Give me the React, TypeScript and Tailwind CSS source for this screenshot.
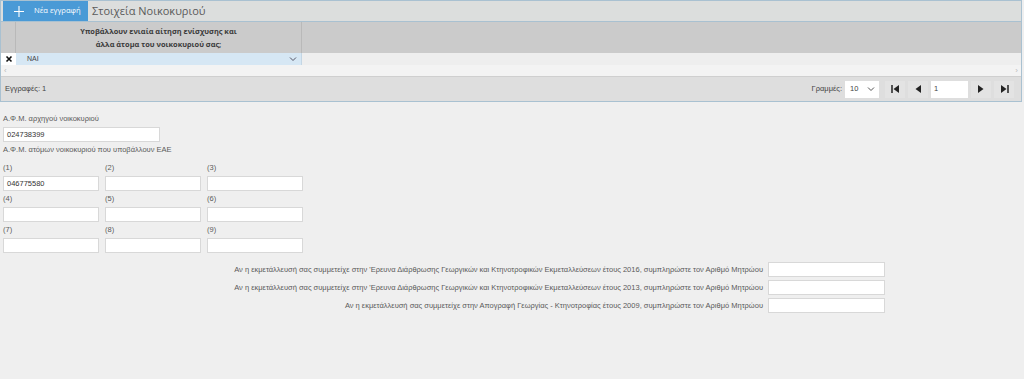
import React from "react";

const F = { fontFamily: "'Liberation Sans', Arial, sans-serif" };

const Field = ({ value = "", w = "w-[96px]" }: { value?: string; w?: string }) => (
  <div
    className={`${w} h-[15px] bg-white border border-[#d8d8d8] px-[3px] text-[7.5px] leading-[13px] text-[#333]`}
  >
    {value}
  </div>
);

const householdSlots = [
  ["(1)", "046775580"],
  ["(2)", ""],
  ["(3)", ""],
  ["(4)", ""],
  ["(5)", ""],
  ["(6)", ""],
  ["(7)", ""],
  ["(8)", ""],
  ["(9)", ""],
];

const registryRows = [
  "Αν η εκμετάλλευσή σας συμμετείχε στην 'Ερευνα Διάρθρωσης Γεωργικών και Κτηνοτροφικών Εκμεταλλεύσεων έτους 2016, συμπληρώστε τον Αριθμό Μητρώου",
  "Αν η εκμετάλλευσή σας συμμετείχε στην 'Ερευνα Διάρθρωσης Γεωργικών και Κτηνοτροφικών Εκμεταλλεύσεων έτους 2013, συμπληρώστε τον Αριθμό Μητρώου",
  "Αν η εκμετάλλευσή σας συμμετείχε στην Απογραφή Γεωργίας - Κτηνοτροφίας έτους 2009, συμπληρώστε τον Αριθμό Μητρώου",
];

const PagerBtn = ({ children }: { children: React.ReactNode }) => (
  <div className="w-[20px] h-[17px] flex items-center justify-center bg-[#e3e3e3] text-[#333]">
    {children}
  </div>
);

export default function App() {
  return (
    <div className="w-[1024px] h-[379px] bg-[#efefef] overflow-hidden" style={F}>
      {/* grid panel */}
      <div className="w-[1022px] border border-[#a9c1d1] bg-[#eeeeee]">
        {/* toolbar */}
        <div className="h-[21px] flex items-stretch bg-[#dcdedd] border-b border-[#a9c1d1]">
          <div className="w-[85px] ml-[2px] flex items-center gap-[10px] pl-[11px] bg-[#4a9ad6] text-white">
            <svg width="10" height="11" viewBox="0 0 10 11">
              <path d="M5 0V11M0 5.5H10" stroke="white" strokeWidth="1.1" />
            </svg>
            <span className="text-[7.6px]" style={{ fontFamily: "'Open Sans', sans-serif" }}>
              Νέα εγγραφή
            </span>
          </div>
          <div
            className="flex items-center pl-[4px] text-[11px] text-[#5a5a5a]"
            style={{ fontFamily: "'Open Sans', sans-serif" }}
          >
            Στοιχεία Νοικοκυριού
          </div>
        </div>

        {/* header */}
        <div className="h-[31px] flex bg-[#cbcbcb]">
          <div className="w-[15px] border-r border-[#b9b9b9]" />
          <div
            className="w-[286px] border-r border-[#b9b9b9] flex flex-col items-center justify-center text-[7.4px] font-bold leading-[13px] text-[#3a3a3a]"
            style={{ fontFamily: "'Open Sans', sans-serif" }}
          >
            <span>Υποβάλλουν ενιαία αίτηση ενίσχυσης και</span>
            <span>άλλα άτομα του νοικοκυριού σας;</span>
          </div>
        </div>

        {/* data row */}
        <div className="h-[12px] flex">
          <div className="w-[15px] flex items-center justify-center bg-white">
            <svg width="8" height="8" viewBox="0 0 8 8">
              <path d="M1.5 1.5L6.5 6.5M6.5 1.5L1.5 6.5" stroke="#111" strokeWidth="1.6" />
            </svg>
          </div>
          <div className="w-[286px] flex items-center justify-between bg-[#d6e7f4] border-r border-[#c4d6e4] pl-[11px] pr-[4px] text-[7px] text-[#444]">
            <span>NAI</span>
            <svg width="8" height="6" viewBox="0 0 8 6">
              <path d="M1 1.5L4 4.5L7 1.5" stroke="#556" strokeWidth="1" fill="none" />
            </svg>
          </div>
        </div>

        {/* scrollbar */}
        <div className="h-[11px] flex items-center justify-between px-[3px] text-[8px] text-[#bbb] bg-[#f3f3f3]">
          <span>‹</span>
          <span>›</span>
        </div>

        {/* footer */}
        <div className="h-[25px] flex items-center justify-between bg-[#dedede] border-t border-[#cfcfcf] pl-[4px] pr-[7px] text-[7.5px] text-[#444]">
          <span>Εγγραφές: 1</span>
          <div className="flex items-center">
            <span className="mr-[3px]">Γραμμές:</span>
            <div className="w-[34px] h-[17px] bg-white flex items-center justify-between pl-[5px] pr-[4px]">
              <span>10</span>
              <svg width="8" height="6" viewBox="0 0 8 6">
                <path d="M1 1.5L4 4.5L7 1.5" stroke="#555" strokeWidth="1" fill="none" />
              </svg>
            </div>
            <div className="ml-[6px] flex items-center gap-[3px]">
              <PagerBtn>
                <svg width="9" height="8" viewBox="0 0 9 8">
                  <path d="M1 0V8" stroke="#222" strokeWidth="1.5" />
                  <path d="M8 0L2.5 4L8 8Z" fill="#222" />
                </svg>
              </PagerBtn>
              <PagerBtn>
                <svg width="6" height="8" viewBox="0 0 6 8">
                  <path d="M6 0L0.5 4L6 8Z" fill="#222" />
                </svg>
              </PagerBtn>
              <div className="w-[37px] h-[17px] bg-white pl-[3px] flex items-center">1</div>
              <PagerBtn>
                <svg width="6" height="8" viewBox="0 0 6 8">
                  <path d="M0 0L5.5 4L0 8Z" fill="#222" />
                </svg>
              </PagerBtn>
              <PagerBtn>
                <svg width="9" height="8" viewBox="0 0 9 8">
                  <path d="M1 0L6.5 4L1 8Z" fill="#222" />
                  <path d="M8 0V8" stroke="#222" strokeWidth="1.5" />
                </svg>
              </PagerBtn>
            </div>
          </div>
        </div>
      </div>

      {/* form */}
      <div className="pl-[3px] pt-[12px] text-[7.5px] text-[#5a5a5a]">
        <div className="leading-[10px]">Α.Φ.Μ. αρχηγού νοικοκυριού</div>
        <div className="mt-[3px]">
          <Field value="024738399" w="w-[157px]" />
        </div>
        <div className="mt-[3px] leading-[10px]">Α.Φ.Μ. ατόμων νοικοκυριού που υποβάλλουν ΕΑΕ</div>

        <div className="mt-[8px] grid grid-cols-[96px_96px_96px] gap-x-[6px] gap-y-[3px]">
          {householdSlots.map(([label, value]) => (
            <div key={label} className="flex flex-col">
              <span className="leading-[10px] mb-[3px]">{label}</span>
              <Field value={value} />
            </div>
          ))}
        </div>

        <div className="mt-[9px] w-[882px] flex flex-col items-end gap-[3px]">
          {registryRows.map((text) => (
            <div key={text} className="flex items-center gap-[5px]">
              <span>{text}</span>
              <Field w="w-[117px]" />
            </div>
          ))}
        </div>
      </div>
    </div>
  );
}
